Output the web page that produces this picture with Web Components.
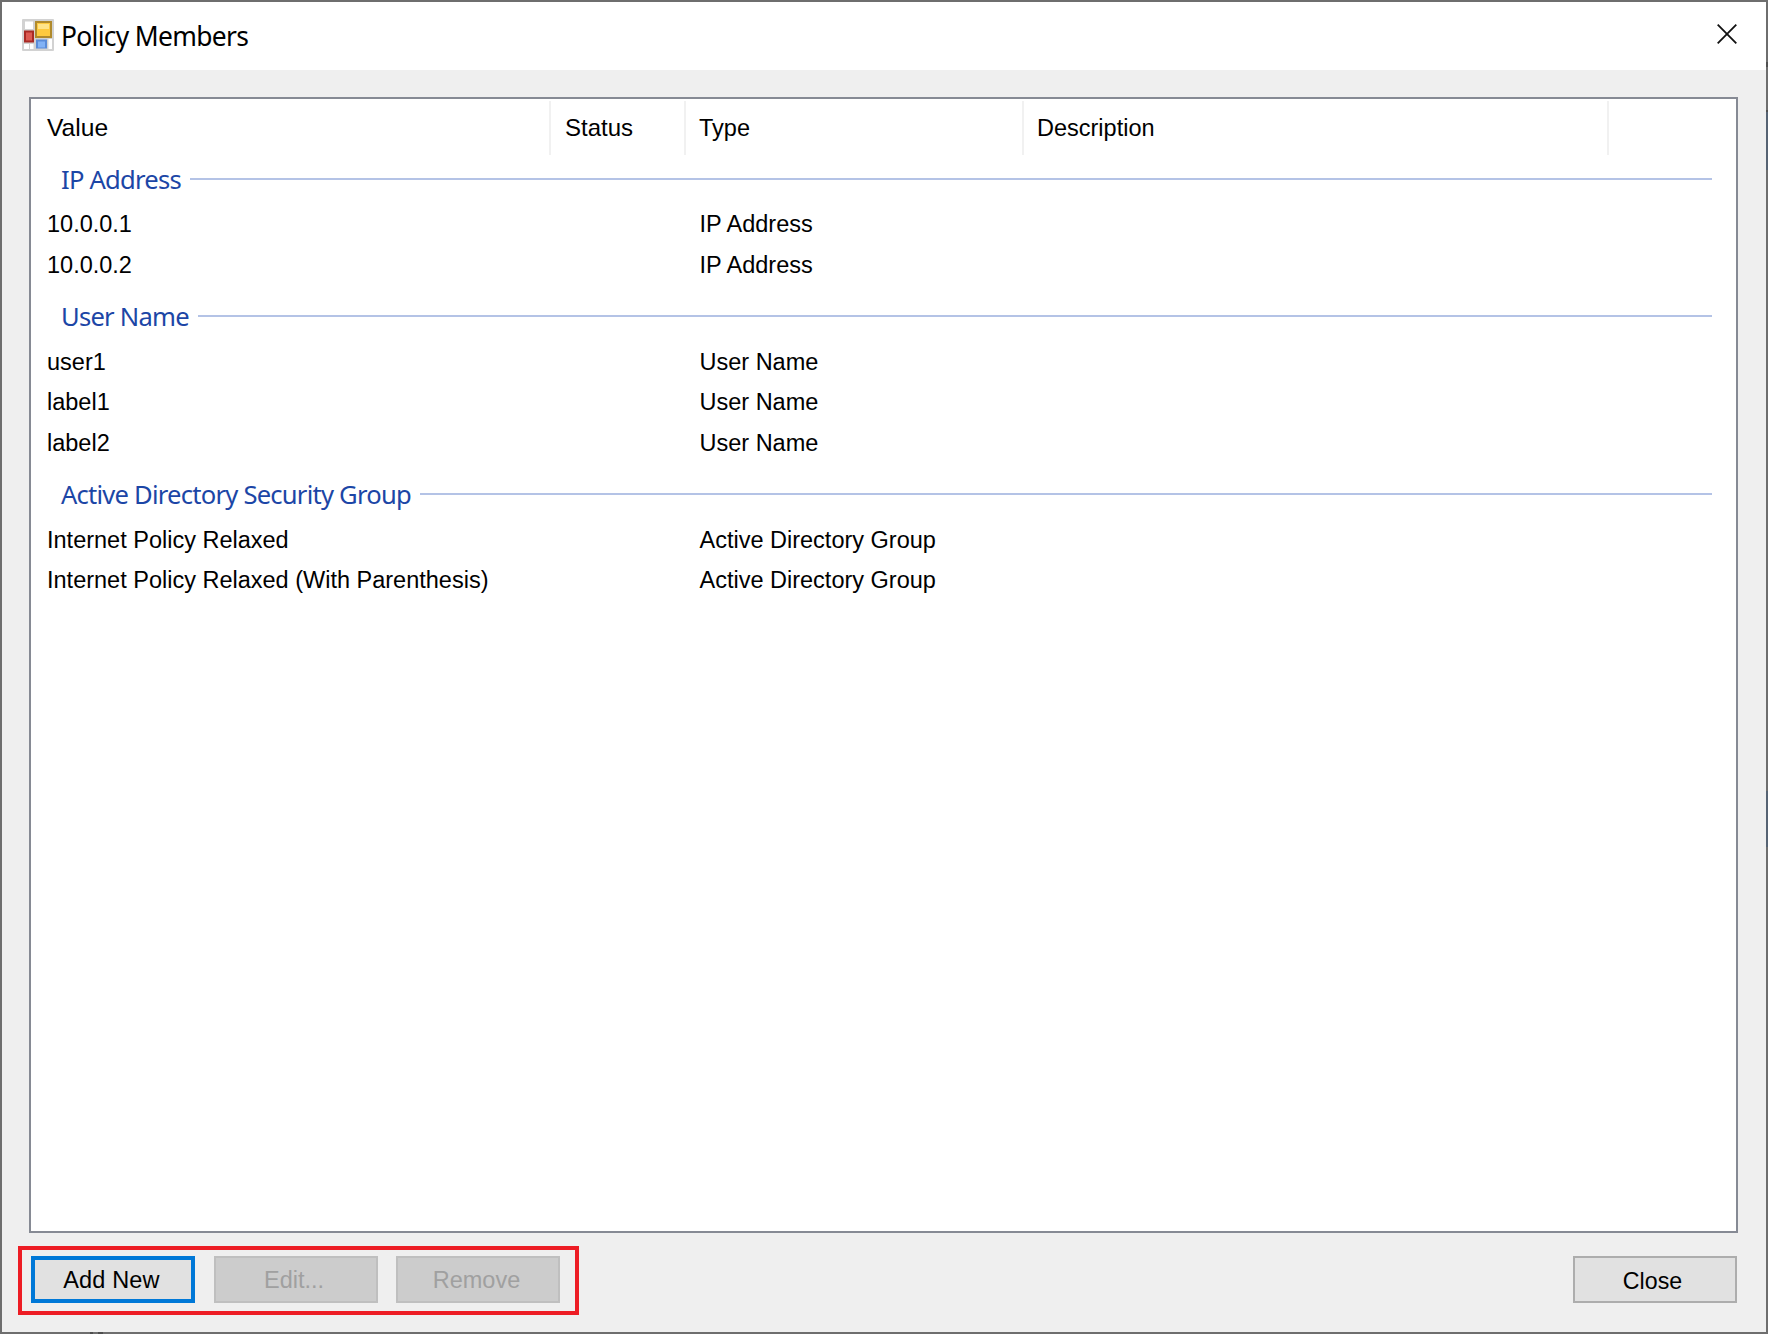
<!DOCTYPE html>
<html><head><meta charset="utf-8"><title>Policy Members</title>
<style>
html,body{margin:0;padding:0;background:#efefef}
</style></head><body>
<policy-dialog title="Policy Members">
  <member-list>
    <list-header></list-header>
    <list-group label="IP Address">
      <list-row value="10.0.0.1" type="IP Address"></list-row>
      <list-row value="10.0.0.2" type="IP Address"></list-row>
    </list-group>
    <list-group label="User Name">
      <list-row value="user1" type="User Name"></list-row>
      <list-row value="label1" type="User Name"></list-row>
      <list-row value="label2" type="User Name"></list-row>
    </list-group>
    <list-group label="Active Directory Security Group">
      <list-row value="Internet Policy Relaxed" type="Active Directory Group"></list-row>
      <list-row value="Internet Policy Relaxed (With Parenthesis)" type="Active Directory Group"></list-row>
    </list-group>
  </member-list>
  <dialog-footer slot="footer">
    <action-group>
      <dlg-button focused>Add New</dlg-button>
      <dlg-button disabled>Edit...</dlg-button>
      <dlg-button disabled>Remove</dlg-button>
    </action-group>
    <dlg-button>Close</dlg-button>
  </dialog-footer>
</policy-dialog>
<script>
const SANS='"Liberation Sans",Arial,sans-serif';
const UI='"Noto Sans","Open Sans",sans-serif';
function def(name,html){
  customElements.define(name,class extends HTMLElement{
    constructor(){super();this.attachShadow({mode:'open'}).innerHTML=html;}
    connectedCallback(){
      this.shadowRoot.querySelectorAll('[data-attr]').forEach(n=>{n.textContent=this.getAttribute(n.dataset.attr)||''});}
  });
}
def('policy-dialog',`<style>
:host{position:relative;display:flex;flex-direction:column;box-sizing:border-box;width:1768px;height:1334px;background:#efefef;border:2px solid #6e6e6e;color:#000}
header{display:flex;align-items:center;height:68px;background:#fff;flex:none;padding-left:20px;box-sizing:border-box}
svg.icon{width:32px;height:32px;flex:none;margin-right:7px;margin-top:-2px;filter:blur(.4px)}
h1{margin:0;font:400 26.4px ${UI};letter-spacing:-.68px;margin-top:0}
svg.x{width:20px;height:20px;margin-left:auto;margin-right:29px;margin-top:-5px}
main{flex:1;min-height:0;display:flex;flex-direction:column;padding:27px 28px 0 27px}
.edge{position:absolute;top:-2px;right:-2px;width:2px;height:1334px;background:linear-gradient(to bottom,transparent 62px,#505050 62px,#505050 67px,transparent 67px,transparent 110px,#505050 110px,#505050 112px,#566373 112px,#566373 170px,transparent 170px,transparent 791px,#566373 791px,#566373 847px,transparent 847px)}
.marks{position:absolute;bottom:-2px;left:88px;width:13px;height:2px;background:linear-gradient(to right,#4e4e4e 3px,transparent 3px,transparent 8px,#4e4e4e 8px)}
</style>
<header>
<svg class="icon" viewBox="0 0 32 32">
<rect x="0" y="0" width="32" height="32" rx="1" fill="#d2d2d2"/>
<rect x="3" y="2.5" width="8" height="7.5" fill="#fff"/>
<rect x="2" y="25" width="5" height="5" fill="#fff"/><rect x="8" y="25" width="3.5" height="5" fill="#fff"/>
<rect x="26.5" y="20" width="3.5" height="10" fill="#fff"/>
<rect x="2" y="11.5" width="10" height="12" fill="#a82a25"/><rect x="4" y="13.5" width="6" height="8" fill="#dc5a52"/>
<rect x="13" y="2" width="17" height="17" fill="#b08a2c"/><rect x="15" y="4" width="13" height="13" fill="#fdc93e"/><rect x="16" y="5" width="11" height="5" fill="#ffe48a"/>
<rect x="14" y="20.5" width="11" height="9" fill="#5a8bd8"/><rect x="16" y="22.5" width="7" height="6" fill="#82b2f5"/>
</svg>
<h1 data-attr="title"></h1>
<svg class="x" viewBox="0 0 20 20"><path d="M.7.7 19.3 19.3M19.3.7.7 19.3" stroke="#111" stroke-width="1.8" fill="none"/></svg>
</header>
<main><slot></slot><slot name="footer"></slot></main><i class="edge"></i><i class="marks"></i>`);
def('member-list',`<style>
:host{display:block;box-sizing:border-box;height:1136px;flex:none;background:#fff;border:2px solid #868a94;padding-top:2px;overflow:hidden}
</style><slot></slot>`);
def('list-header',`<style>
:host{display:grid;grid-template-columns:520px 135px 338px 585px 1fr;height:54px;font:23.5px ${SANS}}
div{display:flex;align-items:center;padding-left:13px;border-right:2px solid #f1f1f1;box-sizing:border-box;padding-bottom:0}
.value{padding-left:16px;font-size:24.6px}
.status{padding-left:14px;font-size:24px}
div:last-child{border:0}
</style><div class="value">Value</div><div class="status">Status</div><div>Type</div><div>Description</div><div></div>`);
def('list-group',`<style>
:host{display:block;margin-top:8.5px}
:host(:first-of-type){margin-top:0}
.h{display:flex;align-items:center;height:48px;padding:0 24px 0 30px;font:400 25.6px ${UI};letter-spacing:-.78px;color:#1c46a6}
.l{flex:1;height:2px;background:#b4c3e6;margin-left:9px;margin-top:-1px}
</style><div class="h"><span data-attr="label"></span><div class="l"></div></div><slot></slot>`);
def('list-row',`<style>
:host{display:grid;grid-template-columns:654px 1fr;height:40.5px;align-items:center;font:23.5px ${SANS};box-sizing:border-box;padding-top:3px}
div{padding-left:16px;white-space:nowrap}
div+div{padding-left:14.5px}
</style><div data-attr="value"></div><div data-attr="type"></div>`);
def('dialog-footer',`<style>
:host{display:flex;align-items:flex-start;justify-content:space-between;padding:13px 1px 0 0;margin-left:-11px}
</style><slot></slot>`);
def('action-group',`<style>
:host{display:flex;gap:18.5px;box-sizing:border-box;width:561px;height:69px;border:4.5px solid #ed1c24;padding:5.5px 0 0 9px}
</style><slot></slot>`);
def('dlg-button',`<style>
:host{display:flex;align-items:center;justify-content:center;box-sizing:border-box;width:164px;height:47px;background:#e1e1e1;border:2px solid #adadad;font:23.5px ${SANS};color:#000;flex:none;padding-top:3px}
:host([focused]){border:4px solid #0078d7;padding-right:3px;letter-spacing:.15px}
:host([disabled]){background:#ccc;border-color:#bfbfbf;color:#a0a0a0;padding-right:3px}
:host(:last-child:not([disabled]):not([focused])){margin-top:10px;padding-right:5px;font-size:23.2px}
</style><slot></slot>`);
</script>
</body></html>
